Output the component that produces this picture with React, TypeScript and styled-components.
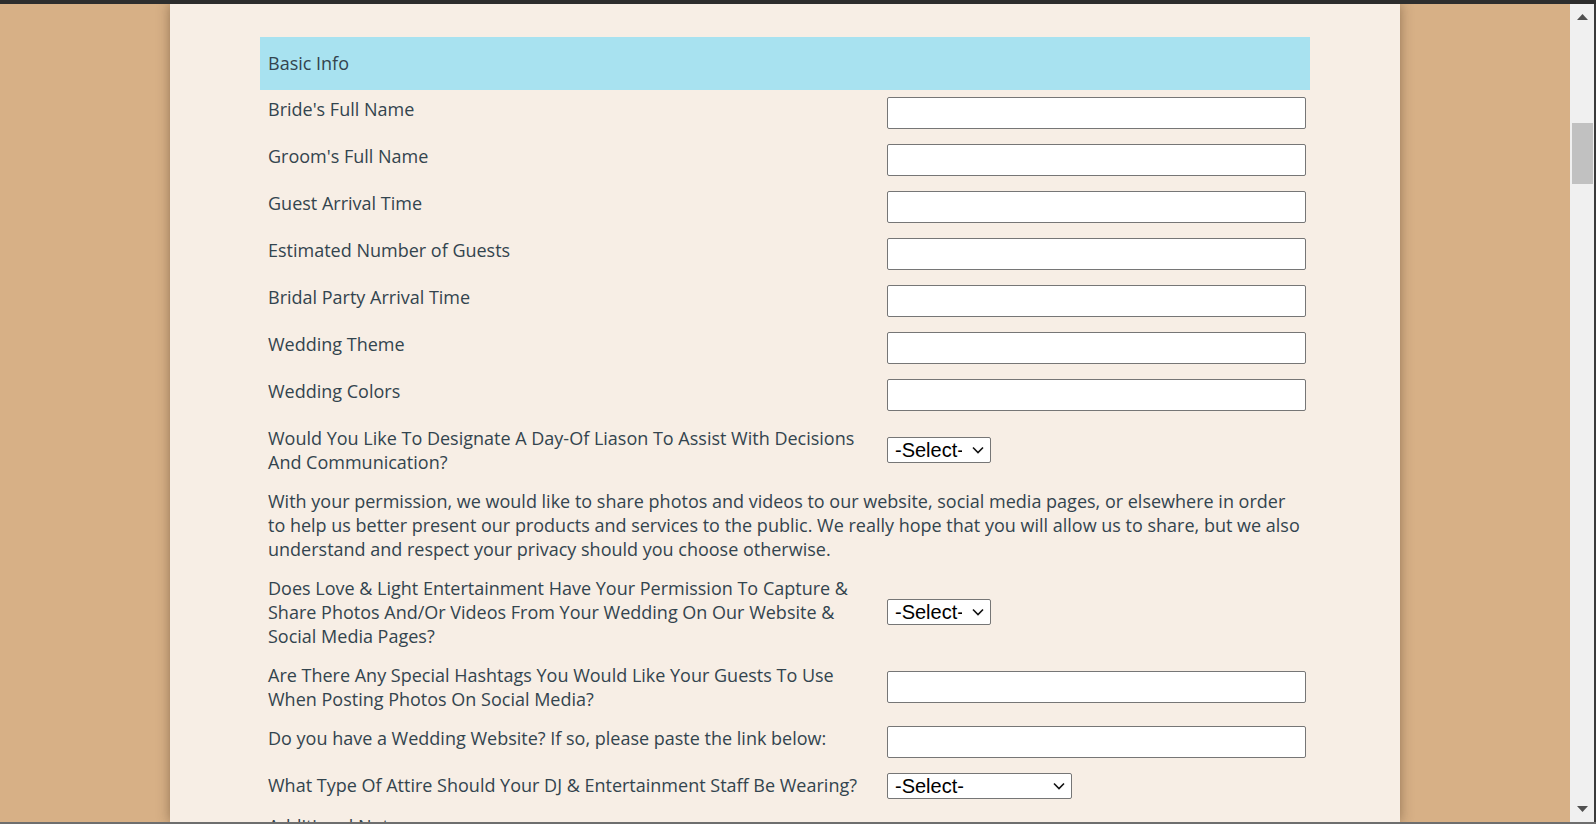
import styled, { createGlobalStyle } from 'styled-components';

const GlobalStyle = createGlobalStyle`
  html, body {
    margin: 0;
    padding: 0;
    height: 100%;
    overflow: hidden;
  }
  #root {
    height: 100%;
  }
  * {
    box-sizing: border-box;
  }
`;

const Frame = styled.div`
  height: 100vh;
  display: flex;
  flex-direction: column;
  background: #2d2d2d;
`;

const TopBar = styled.div`
  height: 4px;
  flex: none;
  background: #2d2d2d;
`;

const Body = styled.div`
  flex: 1;
  display: flex;
  min-height: 0;
  border-bottom: 2px solid #6e6e6e;
`;

const Stage = styled.main`
  flex: 1;
  background: #d7b086;
  display: flex;
  justify-content: center;
  overflow: hidden;
`;

const Panel = styled.div`
  width: 1230px;
  flex: none;
  background: #f7eee5;
  box-shadow: 0 0 12px rgba(60, 40, 20, 0.45);
  padding: 33px 90px 0;
  font-family: 'Open Sans', 'Noto Sans', sans-serif;
  font-size: 18px;
  line-height: 24px;
  color: #33444e;
`;

const SectionHeader = styled.div`
  height: 53px;
  background: #a8e2f0;
  display: flex;
  align-items: center;
  padding: 0 8px 1px;
`;

const FormGrid = styled.div`
  margin-top: 7px;
  display: grid;
  grid-template-columns: 627px 1fr;
  row-gap: 15px;
`;

const Label = styled.div<{ $wide?: boolean }>`
  padding: 0 8px;
  align-self: start;
  grid-column: ${(p) => (p.$wide ? '1 / -1' : 'auto')};
`;

const Field = styled.div<{ $wide?: boolean }>`
  padding: ${(p) => (p.$wide ? '0 4px 0 8px' : '0 4px 0 0')};
  align-self: center;
  display: flex;
  grid-column: ${(p) => (p.$wide ? '1 / -1' : 'auto')};
`;

const Note = styled.p`
  grid-column: 1 / -1;
  margin: 0;
  padding: 0 8px;
`;

const TextInput = styled.input`
  width: 100%;
  height: 32px;
  margin: 0;
  background: #fff;
  border: 1px solid #767676;
  border-radius: 2px;
  font-family: 'Liberation Sans', Arial, sans-serif;
  font-size: 16px;
  padding: 0 6px;
`;

const TextArea = styled.textarea`
  width: 100%;
  height: 110px;
  margin: 0;
  background: #fff;
  border: 1px solid #767676;
  border-radius: 2px;
  font-family: 'Liberation Sans', Arial, sans-serif;
  font-size: 16px;
  resize: vertical;
`;

const SelectWrap = styled.span<{ $w: number }>`
  position: relative;
  display: inline-block;
  width: ${(p) => p.$w}px;
  height: 26px;
`;

const Select = styled.select`
  appearance: none;
  -webkit-appearance: none;
  width: 100%;
  height: 100%;
  margin: 0;
  background: #fff;
  border: 1px solid #767676;
  border-radius: 2px;
  font-family: 'Liberation Sans', Arial, sans-serif;
  font-size: 20px;
  color: #000;
  padding: 0 28px 0 7px;
`;

const Chevron = styled.svg`
  position: absolute;
  right: 7px;
  top: 9px;
  width: 12px;
  height: 8px;
  pointer-events: none;
`;

const Scrollbar = styled.div`
  width: 26px;
  flex: none;
  background: #f0f0f0;
  border-right: 2px solid #3a3a3a;
  display: flex;
  flex-direction: column;
  align-items: center;
`;

const ArrowButton = styled.div`
  height: 26px;
  width: 100%;
  flex: none;
  display: flex;
  align-items: center;
  justify-content: center;
`;

const Track = styled.div`
  flex: 1;
  width: 100%;
  padding: 93px 1px 0 2px;
`;

const Thumb = styled.div`
  height: 61px;
  background: #c1c1c1;
`;

function DropDown({ width }: { width: number }) {
  return (
    <SelectWrap $w={width}>
      <Select defaultValue="">
        <option value="">-Select-</option>
        <option>Yes</option>
        <option>No</option>
      </Select>
      <Chevron viewBox="0 0 12 8">
        <path d="M1 1.5 L6 6.5 L11 1.5" fill="none" stroke="#111" strokeWidth="1.6" />
      </Chevron>
    </SelectWrap>
  );
}

const textRows = [
  "Bride's Full Name",
  "Groom's Full Name",
  'Guest Arrival Time',
  'Estimated Number of Guests',
  'Bridal Party Arrival Time',
  'Wedding Theme',
  'Wedding Colors',
];

export default function App() {
  return (
    <>
      <GlobalStyle />
      <Frame>
        <TopBar />
        <Body>
          <Stage>
            <Panel>
              <SectionHeader>Basic Info</SectionHeader>
              <FormGrid>
                {textRows.map((r) => (
                  <>
                    <Label key={r}>{r}</Label>
                    <Field key={r + '-f'}>
                      <TextInput type="text" />
                    </Field>
                  </>
                ))}
                <Label>Would You Like To Designate A Day-Of Liason To Assist With Decisions And Communication?</Label>
                <Field>
                  <DropDown width={104} />
                </Field>
                <Note>
                  With your permission, we would like to share photos and videos to our website, social media pages, or elsewhere in order to help us better present our products and services to the public. We really hope that you will allow us to share, but we also understand and respect your privacy should you choose otherwise.
                </Note>
                <Label>Does Love &amp; Light Entertainment Have Your Permission To Capture &amp; Share Photos And/Or Videos From Your Wedding On Our Website &amp; Social Media Pages?</Label>
                <Field>
                  <DropDown width={104} />
                </Field>
                <Label>Are There Any Special Hashtags You Would Like Your Guests To Use When Posting Photos On Social Media?</Label>
                <Field>
                  <TextInput type="text" />
                </Field>
                <Label>Do you have a Wedding Website? If so, please paste the link below:</Label>
                <Field>
                  <TextInput type="text" />
                </Field>
                <Label>What Type Of Attire Should Your DJ &amp; Entertainment Staff Be Wearing?</Label>
                <Field>
                  <DropDown width={185} />
                </Field>
                <Label $wide>Additional Notes</Label>
                <Field $wide>
                  <TextArea />
                </Field>
              </FormGrid>
            </Panel>
          </Stage>
          <Scrollbar>
            <ArrowButton>
              <svg width="11" height="6" viewBox="0 0 11 6">
                <path d="M0 6 L5.5 0 L11 6 Z" fill="#505050" />
              </svg>
            </ArrowButton>
            <Track>
              <Thumb />
            </Track>
            <ArrowButton>
              <svg width="11" height="6" viewBox="0 0 11 6">
                <path d="M0 0 L5.5 6 L11 0 Z" fill="#505050" />
              </svg>
            </ArrowButton>
          </Scrollbar>
        </Body>
      </Frame>
    </>
  );
}
